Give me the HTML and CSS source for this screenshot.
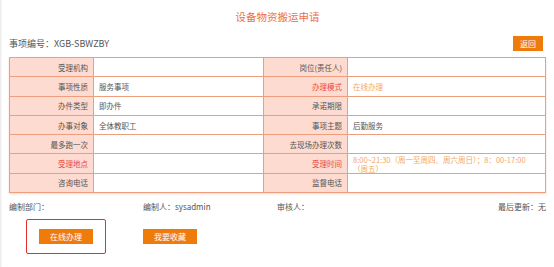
FILE: index.html
```
<!DOCTYPE html>
<html lang="zh-CN">
<head>
    <meta charset="UTF-8">
    <meta name="viewport" content="width=device-width, initial-scale=1.0">
    <title>设备物资搬运申请</title>
    <link rel="stylesheet" href="styles.css">
</head>
<body>
    <div class="page">
        <h1>设备物资搬运申请</h1>

        <div class="item-head">
            <span>事项编号：XGB-SBWZBY</span>
            <button class="btn back-btn">返回</button>
        </div>

        <table class="info-table">
            <colgroup>
                <col class="c-label">
                <col class="c-value">
                <col class="c-label">
                <col class="c-value2">
            </colgroup>
            <tbody>
                <tr>
                    <th>受理机构</th>
                    <td></td>
                    <th>岗位(责任人)</th>
                    <td></td>
                </tr>
                <tr>
                    <th>事项性质</th>
                    <td>服务事项</td>
                    <th class="red">办理模式</th>
                    <td class="orange">在线办理</td>
                </tr>
                <tr>
                    <th>办件类型</th>
                    <td>即办件</td>
                    <th>承诺期限</th>
                    <td></td>
                </tr>
                <tr>
                    <th>办事对象</th>
                    <td>全体教职工</td>
                    <th>事项主题</th>
                    <td>后勤服务</td>
                </tr>
                <tr>
                    <th>最多跑一次</th>
                    <td></td>
                    <th>去现场办理次数</th>
                    <td></td>
                </tr>
                <tr>
                    <th class="red">受理地点</th>
                    <td></td>
                    <th class="red">受理时间</th>
                    <td class="orange">8:00~21:30（周一至周四、周六周日）；8：00-17:00（周五）</td>
                </tr>
                <tr>
                    <th>咨询电话</th>
                    <td></td>
                    <th>监督电话</th>
                    <td></td>
                </tr>
            </tbody>
        </table>

        <div class="meta">
            <span class="meta-dept">编制部门：</span>
            <span class="meta-author">编制人：sysadmin</span>
            <span class="meta-check">审核人：</span>
            <span class="meta-update">最后更新：无</span>
        </div>

        <div class="actions">
            <div class="highlight">
                <button class="btn">在线办理</button>
            </div>
            <button class="btn">我要收藏</button>
        </div>
    </div>
</body>
</html>
```

FILE: styles.css
```
* {
    box-sizing: border-box;
}
body {
    margin: 0;
    font-family: "Noto Sans CJK SC", "Liberation Sans", sans-serif;
    color: #555;
    background: #fff;
}
.page {
    width: 554px;
    height: 267px;
    padding: 0 8px 0 9px;
    box-shadow: inset 2px 0 2px -1px #e6e6e6;
}
h1 {
    margin: 0;
    padding-top: 10px;
    height: 30px;
    text-align: center;
    font-size: 10.5px;
    font-weight: normal;
    color: #ec6f46;
    line-height: 14px;
}
.item-head {
    display: flex;
    justify-content: space-between;
    align-items: center;
    height: 27px;
    font-size: 9px;
    padding-right: 3px;
}
.btn {
    font-family: inherit;
    background-color: #ef7b0b;
    color: #fff;
    border: none;
    font-size: 8px;
    line-height: 15px;
    height: 15px;
    padding: 0;
    width: 54px;
    cursor: pointer;
}
.back-btn {
    width: 30px;
}
.info-table {
    width: 537px;
    border-collapse: collapse;
    font-size: 7.5px;
    box-shadow: 0 1px 2px #f6d6cc;
}
.c-label {
    width: 84px;
}
.c-value {
    width: 170px;
}
.info-table th,
.info-table td {
    border: 1px solid #ec9e7f;
    height: 19.3px;
    padding: 0 5px;
    line-height: 9px;
}
.info-table th {
    background-color: #fddbd1;
    font-weight: normal;
    text-align: right;
    color: #555;
}
.info-table td {
    text-align: left;
}
.info-table .red {
    color: #ea4a3e;
}
.info-table .orange {
    color: #f3a668;
}
.meta {
    display: flex;
    font-size: 8px;
    margin-top: 8px;
    height: 12px;
    line-height: 12px;
}
.meta-dept {
    width: 134px;
}
.meta-author {
    width: 134px;
}
.meta-check {
    flex: 1;
}
.actions {
    display: flex;
    align-items: center;
    margin-top: 6px;
}
.highlight {
    margin-left: 17px;
    width: 80px;
    height: 35px;
    border: 1.5px solid #e0312c;
    border-radius: 2px;
    display: flex;
    align-items: center;
    justify-content: center;
}
.actions > .btn {
    margin-left: 37px;
}
```
